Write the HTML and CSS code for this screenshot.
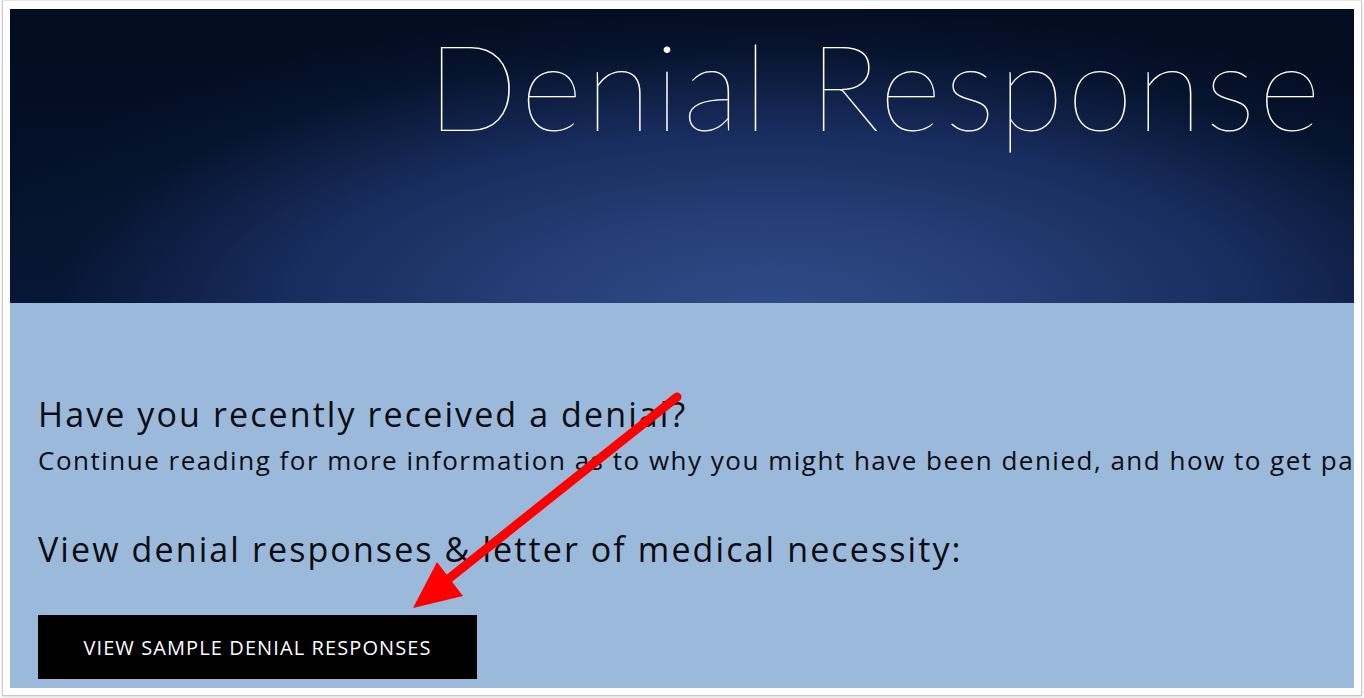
FILE: index.html
```html
<!DOCTYPE html>
<html lang="en">
<head>
<meta charset="utf-8">
<title>Denial Response</title>
<link rel="stylesheet" href="styles.css">
</head>
<body>
<div class="frame">
  <div class="page">
    <header class="hero">
      <h1 class="hero-title">Denial Response</h1>
    </header>
    <section class="content">
      <h2 class="heading">Have you recently received a denial?</h2>
      <p class="lead">Continue reading for more information as to why you might have been denied, and how to get paid for your claim.</p>
      <h2 class="heading heading-second">View denial responses &amp; letter of medical necessity:</h2>
      <a class="btn" href="#">VIEW SAMPLE DENIAL RESPONSES</a>
    </section>
  </div>
</div>
<svg class="annotation" width="1364" height="698" viewBox="0 0 1364 698" xmlns="http://www.w3.org/2000/svg">
  <line x1="677" y1="397" x2="442" y2="584" stroke="#ff0000" stroke-width="9" stroke-linecap="round"/>
  <polygon points="413,608 437,562 463,596" fill="#ff0000"/>
</svg>
</body>
</html>
```
FILE: styles.css
```css
html, body {
  margin: 0;
  padding: 0;
  background: #ffffff;
}
body {
  width: 1364px;
  height: 698px;
  overflow: hidden;
  position: relative;
}
.frame {
  margin-left: 2px;
  width: 1360px;
  height: 696px;
  box-sizing: border-box;
  border: 1px solid #c9c9c9;
  border-top-color: #e6e6e6;
  padding: 8px 7px 7px 7px;
  box-shadow: 0 1px 2px rgba(0,0,0,0.15);
}
.page {
  width: 1344px;
  height: 679px;
  overflow: hidden;
  background: #9bbadb;
}
.hero {
  height: 294px;
  box-sizing: border-box;
  padding: 16px 30px 0 0;
  background:
    radial-gradient(ellipse 840px 310px at 760px 300px, #2f4b87 0%, #263f78 28%, #182c5d 58%, rgba(8,22,50,0.6) 85%, rgba(3,12,31,0) 100%),
    linear-gradient(180deg, #030c20 0%, #041129 55%, #07173a 100%);
  text-align: right;
}
.hero-title {
  margin: 0;
  font-family: Lato, "Open Sans", sans-serif;
  font-weight: 100;
  font-size: 120px;
  line-height: 1;
  letter-spacing: 3.4px;
  color: #ffffff;
  white-space: nowrap;
}
.content {
  padding: 91px 0 0 28px;
  color: #0b0b10;
}
.heading {
  margin: 0;
  font-family: "Open Sans", sans-serif;
  font-weight: 400;
  font-size: 34px;
  line-height: 40px;
  letter-spacing: 2.1px;
  white-space: nowrap;
}
.lead {
  margin: 11px 0 0 0;
  font-family: "Open Sans", sans-serif;
  font-size: 26px;
  line-height: 31px;
  letter-spacing: 1.5px;
  white-space: nowrap;
}
.heading-second {
  margin-top: 53px;
}
.btn {
  display: flex;
  align-items: center;
  justify-content: center;
  margin-top: 46px;
  width: 439px;
  height: 64px;
  background: #000000;
  color: #ffffff;
  text-decoration: none;
  font-family: "Open Sans", sans-serif;
  font-size: 20px;
  letter-spacing: 1.1px;
}
.annotation {
  position: absolute;
  left: 0;
  top: 0;
  pointer-events: none;
}
```
